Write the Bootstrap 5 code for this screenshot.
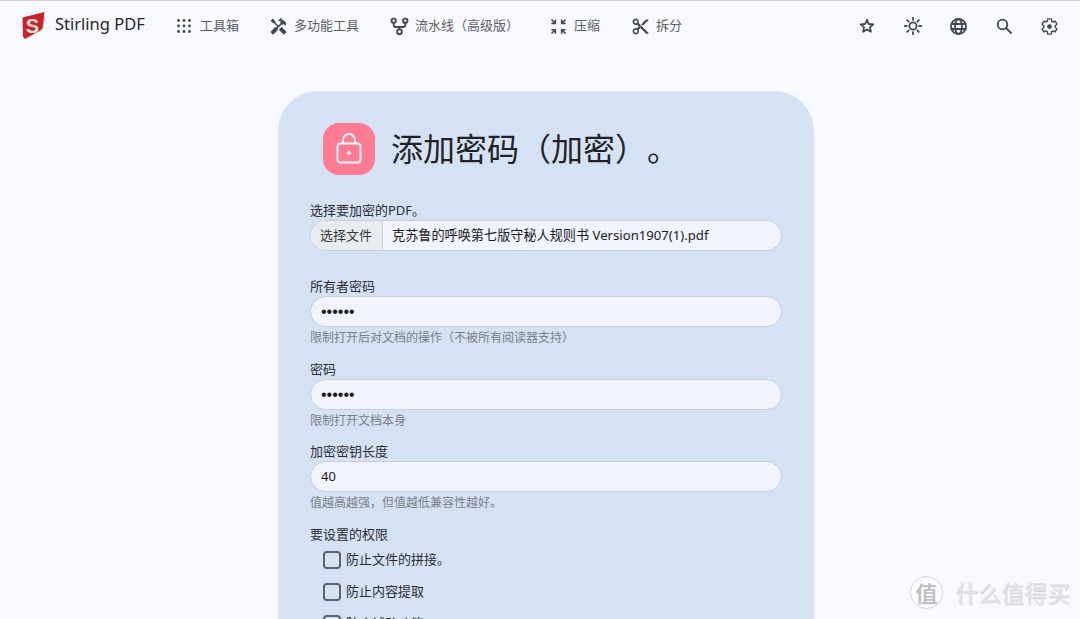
<!DOCTYPE html>
<html lang="zh-CN">
<head>
<meta charset="utf-8">
<title>Stirling PDF</title>
<link href="https://cdn.jsdelivr.net/npm/bootstrap@5.3.0/dist/css/bootstrap.min.css" rel="stylesheet">
<style>
html,body{height:619px;overflow:hidden}
body{background:#f8f9ff;font-family:"Noto Sans","Noto Sans CJK SC",sans-serif;font-size:13px;color:#1b1b1f;position:relative;border-top:1px solid #cfd0d3;text-spacing-trim:space-all}
.topbar{height:50px;padding:0 0 0 22px}
.brand{font-size:16.500px;color:#1f2430;gap:9px;width:154px}
.brandtext{margin-bottom:4px}
.navitem{font-size:13px;color:#5c6068;gap:6px;white-space:nowrap;margin-left:30px}
.navwide{margin-left:31px}
.navfirst{margin-left:0;gap:8px}
.navitem svg,.tools svg{display:block}
.ico{fill:#44474f;stroke:none}
.line{fill:none;stroke:#44474f;stroke-width:1.800;stroke-linecap:round;stroke-linejoin:round}
.tools{margin-left:auto;width:200px;margin-right:21px}
.panel{width:536px;height:560px;margin:40px 0 0 278px;background:#d4e2f3;border-radius:40px 40px 0 0;padding:32px}
.headrow{gap:16px;margin-left:13px;height:52px;margin-bottom:26px}
.lockbox{width:52px;height:52px;border-radius:16px;background:#ff7a92}
.heading{font-size:32px;line-height:56px;margin:0;color:#1f2328;font-weight:400}
.lbl{font-size:13px;line-height:18px;color:#2b2d33;display:block;margin:0 0 1px}
.pill{height:31px;border:1px solid #c4cfdf;border-radius:16px;background:#f1f4fd;font-size:13px;color:#1b1b1f;padding:0 10px}
.filebtn{background:#e9ecef;padding:0 10px 0 9px;border-right:1px solid #c4cfdf;color:#33363c}
.filename{padding:0 9px;font-size:13.150px}
.dots{font-family:"Liberation Sans",sans-serif;font-size:16px;line-height:29px}
.hint{font-size:12px;line-height:18px;color:#7b8088;margin-top:2px}
.grp{margin-bottom:12.650px}
.filegrp{margin-bottom:26px}
.chk{gap:5px;margin-left:13px;height:32px;font-size:13px;color:#2b2d33}
.box{width:18px;height:18px;border:2px solid #5a6270;border-radius:4px;flex:none}
.wm{position:absolute;right:10px;bottom:10px;gap:12px;color:#e4e5ea;font-size:23px;text-shadow:1px 1px 1px #cfd0d6;line-height:32px}
.wmc{width:33px;height:33px;border-radius:50%;background:#fff;border:1px solid #d5d6dc;color:#bfc0c6;font-size:22px;font-weight:700;text-shadow:none}
</style>
</head>
<body>
<nav class="topbar d-flex align-items-center">
  <div class="brand d-flex align-items-center">
    <svg width="24" height="28" viewBox="0 0 24 28"><path d="M4 26 21 18l2-14-4 0z" fill="#c9c9c9"/><path d="M0.500 5.500 22.500 0 20.500 16 18 18.500 3 27 1 25z" fill="#c8232a"/><text x="10.500" y="21" text-anchor="middle" font-family="Liberation Sans" font-size="20" font-weight="700" fill="#f3dcdc">S</text></svg>
    <span class="brandtext">Stirling PDF</span>
  </div>
  <div class="navitem navfirst d-flex align-items-center">
    <svg width="16" height="16" viewBox="0 0 16 16" class="ico"><circle cx="2.500" cy="2.500" r="1.400"/><circle cx="8" cy="2.500" r="1.400"/><circle cx="13.500" cy="2.500" r="1.400"/><circle cx="2.500" cy="8" r="1.400"/><circle cx="8" cy="8" r="1.400"/><circle cx="13.500" cy="8" r="1.400"/><circle cx="2.500" cy="13.500" r="1.400"/><circle cx="8" cy="13.500" r="1.400"/><circle cx="13.500" cy="13.500" r="1.400"/></svg>
    <span>工具箱</span>
  </div>
  <div class="navitem d-flex align-items-center">
    <svg width="19" height="19" viewBox="0 0 24 24" class="ico"><path d="M21.670 18.170l-5.300-5.300h-.99l-2.540 2.540v.99l5.300 5.300c.39.390 1.020.390 1.410 0l2.120-2.120c.39-.380.390-1.020 0-1.410zM17.340 10.190l1.410-1.410 2.120 2.120c1.170-1.170 1.170-3.070 0-4.240l-3.540-3.540-1.410 1.410V1.710l-.7-.71-3.540 3.540.71.710h2.830l-1.410 1.410 1.060 1.060-2.890 2.890-4.130-4.130V5.060L4.830 2.040 2 4.870 5.030 7.900h1.410l4.130 4.130-.85.850H7.600l-5.300 5.300c-.39.390-.39 1.020 0 1.410l2.120 2.120c.39.390 1.020.390 1.410 0l5.300-5.300v-2.120l5.150-5.150 1.060 1.050z"/></svg>
    <span>多功能工具</span>
  </div>
  <div class="navitem navwide d-flex align-items-center">
    <svg width="19" height="19" viewBox="0 0 18 18" class="line"><rect x="1.500" y="1.500" width="4" height="4" rx="1.500"/><rect x="12.500" y="1.500" width="4" height="4" rx="1.500"/><circle cx="9" cy="14" r="2.300"/><path d="M3.500 5.500v2a2 2 0 0 0 2 2h7a2 2 0 0 0 2-2v-2M9 9.500v2.200"/></svg>
    <span>流水线（高级版）</span>
  </div>
  <div class="navitem d-flex align-items-center">
    <svg width="19" height="19" viewBox="0 0 24 24" class="ico"><path d="M9 9V3H7v2.590L3.910 2.500 2.500 3.910 5.590 7H3v2h6zm12 0V7h-2.590l3.090-3.090-1.410-1.410L17 5.590V3h-2v6h6zM3 15v2h2.590L2.500 20.090l1.410 1.410L7 18.410V21h2v-6H3zm12 0v6h2v-2.590l3.090 3.090 1.410-1.410L18.410 17H21v-2h-6z"/></svg>
    <span>压缩</span>
  </div>
  <div class="navitem navwide d-flex align-items-center">
    <svg width="19" height="19" viewBox="0 0 24 24" class="ico"><path d="M9.640 7.640c.23-.5.360-1.050.360-1.640 0-2.210-1.790-4-4-4S2 3.790 2 6s1.790 4 4 4c.59 0 1.140-.13 1.640-.36L10 12l-2.360 2.360C7.140 14.130 6.590 14 6 14c-2.210 0-4 1.790-4 4s1.790 4 4 4 4-1.790 4-4c0-.59-.13-1.140-.36-1.640L12 14l7 7h3v-1L9.640 7.640zM6 8c-1.100 0-2-.89-2-2s.9-2 2-2 2 .89 2 2-.9 2-2 2zm0 12c-1.100 0-2-.89-2-2s.9-2 2-2 2 .89 2 2-.9 2-2 2zm6-7.500c-.28 0-.5-.22-.5-.5s.22-.5.5-.5.5.22.5.5-.22.5-.5.5zM19 3l-6 6 2 2 7-7V3h-3z"/></svg>
    <span>拆分</span>
  </div>
  <div class="tools d-flex justify-content-between align-items-center">
    <svg width="16" height="16" viewBox="0 0 16 16" class="line"><path d="M8 1.800 9.800 6l4.500.4-3.400 3 1 4.400L8 11.500l-3.900 2.300 1-4.400-3.400-3L6.200 6z"/></svg>
    <svg width="18" height="18" viewBox="0 0 18 18" class="line"><circle cx="9" cy="9" r="3.600"/><path d="M9 .8v2M9 15.200v2M.8 9h2M15.200 9h2M3.200 3.200l1.400 1.400M13.400 13.400l1.400 1.400M3.200 14.800l1.400-1.400M13.400 4.600l1.400-1.400"/></svg>
    <svg width="17" height="17" viewBox="0 0 17 17" class="line"><circle cx="8.500" cy="8.500" r="7.500"/><ellipse cx="8.500" cy="8.500" rx="3.400" ry="7.500"/><path d="M1.500 6h14M1.500 11h14"/></svg>
    <svg width="16" height="16" viewBox="0 0 16 16" class="line"><circle cx="6.500" cy="6.500" r="4.800"/><path d="M10 10l5 5"/></svg>
    <svg width="19" height="19" viewBox="0 0 24 24" class="line"><path d="M19.140 12.940c.04-.3.060-.61.060-.94 0-.32-.02-.64-.07-.94l2.030-1.580c.18-.14.230-.41.120-.61l-1.920-3.320c-.12-.22-.37-.29-.59-.22l-2.390.96c-.5-.38-1.030-.7-1.620-.94l-.36-2.540c-.04-.24-.24-.41-.48-.41h-3.840c-.24 0-.43.170-.47.410l-.36 2.540c-.59.240-1.130.570-1.620.940l-2.390-.96c-.22-.08-.47 0-.59.220L2.740 8.870c-.12.210-.08.470.12.610l2.030 1.580c-.05.3-.09.630-.09.940s.02.640.07.940l-2.030 1.580c-.18.140-.23.410-.12.610l1.920 3.320c.12.220.37.290.59.220l2.390-.96c.5.380 1.030.7 1.620.94l.36 2.540c.05.240.24.410.48.410h3.840c.24 0 .44-.17.47-.41l.36-2.540c.59-.24 1.130-.56 1.620-.94l2.390.96c.22.080.47 0 .59-.22l1.920-3.320c.12-.22.070-.47-.12-.61l-2.010-1.580z"/><circle cx="12" cy="12" r="3" fill="#44474f" stroke="none"/></svg>
  </div>
</nav>
<main class="panel">
  <div class="headrow d-flex align-items-center">
    <div class="lockbox d-flex align-items-center justify-content-center">
      <svg width="26" height="32" viewBox="0 0 26 32" fill="none" stroke="#fff" stroke-width="1.800"><rect x="1.500" y="10.500" width="23" height="19" rx="3"/><path d="M7 10.500V7a6 6 0 0 1 12 0v3.500"/><circle cx="13" cy="20" r="2" fill="#fff" stroke="none"/></svg>
    </div>
    <h1 class="heading">添加密码（加密）。</h1>
  </div>
  <div class="filegrp">
    <label class="lbl">选择要加密的PDF。</label>
    <div class="pill d-flex align-items-center p-0 overflow-hidden">
      <span class="filebtn h-100 d-flex align-items-center">选择文件</span>
      <span class="filename">克苏鲁的呼唤第七版守秘人规则书 Version1907(1).pdf</span>
    </div>
  </div>
  <div class="grp">
    <label class="lbl">所有者密码</label>
    <div class="pill dots">••••••</div>
    <div class="hint">限制打开后对文档的操作（不被所有阅读器支持）</div>
  </div>
  <div class="grp">
    <label class="lbl">密码</label>
    <div class="pill dots">••••••</div>
    <div class="hint">限制打开文档本身</div>
  </div>
  <div class="grp">
    <label class="lbl">加密密钥长度</label>
    <div class="pill d-flex align-items-center">40</div>
    <div class="hint">值越高越强，但值越低兼容性越好。</div>
  </div>
  <div>
    <label class="lbl">要设置的权限</label>
    <div class="chk d-flex align-items-center"><span class="box"></span><span>防止文件的拼接。</span></div>
    <div class="chk d-flex align-items-center"><span class="box"></span><span>防止内容提取</span></div>
    <div class="chk d-flex align-items-center"><span class="box"></span><span>防止辅助功能</span></div>
  </div>
</main>
<div class="wm d-flex align-items-center"><span class="wmc d-flex align-items-center justify-content-center">值</span><span>什么值得买</span></div>
<script src="https://cdn.jsdelivr.net/npm/bootstrap@5.3.0/dist/js/bootstrap.bundle.min.js"></script>
</body>
</html>
